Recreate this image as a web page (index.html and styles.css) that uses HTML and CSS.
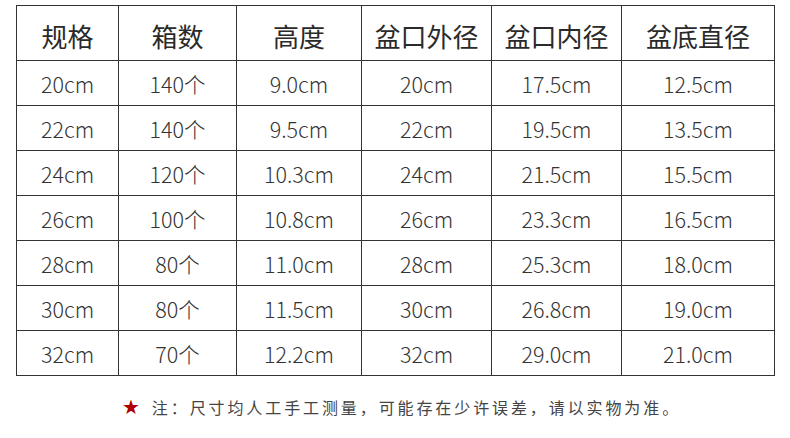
FILE: index.html
```html
<!DOCTYPE html>
<html lang="zh-CN">
<head>
<meta charset="utf-8">
<link rel="stylesheet" href="styles.css">
</head>
<body>
<div class="page">
  <table class="spec">
    <colgroup>
      <col class="c1"><col class="c2"><col class="c3"><col class="c4"><col class="c5"><col class="c6">
    </colgroup>
    <thead>
      <tr><th>规格</th><th>箱数</th><th>高度</th><th>盆口外径</th><th>盆口内径</th><th>盆底直径</th></tr>
    </thead>
    <tbody>
      <tr><td>20cm</td><td>140个</td><td>9.0cm</td><td>20cm</td><td>17.5cm</td><td>12.5cm</td></tr>
      <tr><td>22cm</td><td>140个</td><td>9.5cm</td><td>22cm</td><td>19.5cm</td><td>13.5cm</td></tr>
      <tr><td>24cm</td><td>120个</td><td>10.3cm</td><td>24cm</td><td>21.5cm</td><td>15.5cm</td></tr>
      <tr><td>26cm</td><td>100个</td><td>10.8cm</td><td>26cm</td><td>23.3cm</td><td>16.5cm</td></tr>
      <tr><td>28cm</td><td>80个</td><td>11.0cm</td><td>28cm</td><td>25.3cm</td><td>18.0cm</td></tr>
      <tr><td>30cm</td><td>80个</td><td>11.5cm</td><td>30cm</td><td>26.8cm</td><td>19.0cm</td></tr>
      <tr><td>32cm</td><td>70个</td><td>12.2cm</td><td>32cm</td><td>29.0cm</td><td>21.0cm</td></tr>
    </tbody>
  </table>
  <p class="note"><span class="star">★</span><span class="note-text">注：尺寸均人工手工测量，可能存在少许误差，请以实物为准。</span></p>
</div>
</body>
</html>
```

FILE: styles.css
```css
html, body {
  margin: 0;
  padding: 0;
  background: #ffffff;
}

.page {
  width: 790px;
  height: 438px;
  padding-top: 5px;
  box-sizing: border-box;
  font-family: "Noto Sans CJK SC", "Noto Sans", sans-serif;
  color: #333333;
}

.spec {
  margin-left: 16px;
  width: 758px;
  border-collapse: collapse;
  table-layout: fixed;
}

.c1 { width: 102px; }
.c2 { width: 118px; }
.c3 { width: 125px; }
.c4 { width: 130px; }
.c5 { width: 130px; }
.c6 { width: 153px; }

.spec th,
.spec td {
  border: 1px solid #333333;
  text-align: center;
  padding: 0;
}

.spec th {
  height: 55px;
  font-size: 26px;
  font-weight: 400;
  color: #2a2a2a;
  padding-top: 4px;
  box-sizing: border-box;
}

.spec td {
  height: 44px;
  font-size: 21.5px;
  font-weight: 300;
  color: #333333;
}

.note {
  margin: 21px 0 0 0;
  padding-left: 13px;
  text-align: center;
  font-size: 16px;
  line-height: 20px;
  color: #444444;
}

.star {
  color: #b00000;
  font-size: 20px;
  margin-right: 12px;
  font-family: "DejaVu Sans", sans-serif;
}

.note-text {
  letter-spacing: 2.9px;
}
```
